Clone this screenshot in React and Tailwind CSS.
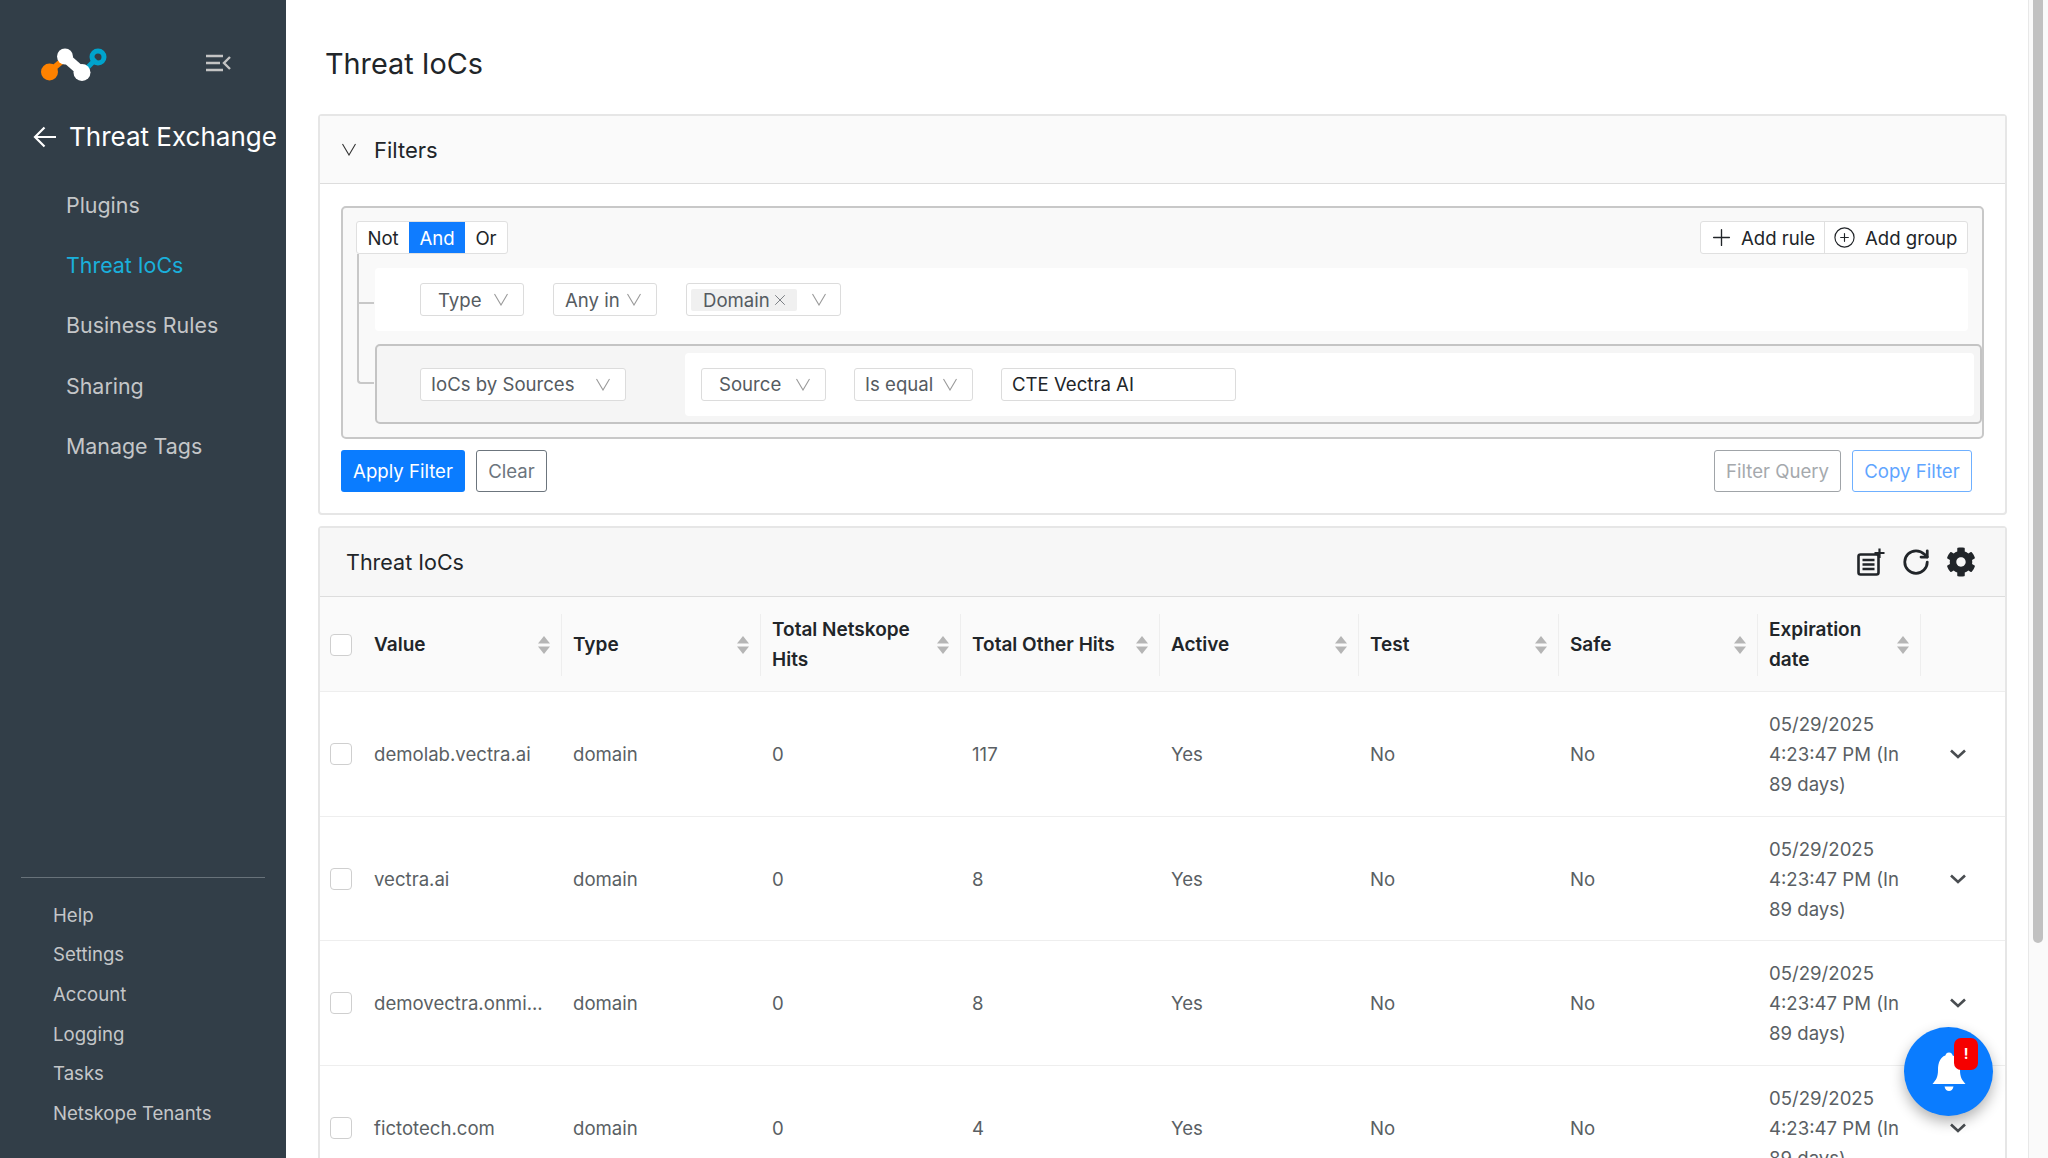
import React from "react";
import { Plus, CirclePlus, X, RotateCw } from "lucide-react";

const SortIcon = () => (
  <svg width="12" height="18" viewBox="0 0 12 18" className="shrink-0"><path d="M6 0 L12 7.5 H0 Z" fill="#b5b5b5"/><path d="M0 10.5 H12 L6 18 Z" fill="#b5b5b5"/></svg>
);
const Logo = () => (
  <svg width="68" height="36" viewBox="0 0 68 36" className="shrink-0">
    <path d="M8 26 L21 15" stroke="#ff8200" strokeWidth="6" />
    <circle cx="8.500" cy="26" r="8.500" fill="#ff8200" />
    <path d="M46 22 L55 13" stroke="#00a3cc" strokeWidth="5" />
    <circle cx="57" cy="11" r="6" fill="none" stroke="#00a3cc" strokeWidth="5" />
    <path d="M24 11 L41 26" stroke="#fff" strokeWidth="10" />
    <circle cx="24" cy="10.500" r="8" fill="#fff" />
    <circle cx="41" cy="26.500" r="8.500" fill="#fff" />
  </svg>
);
const MenuIcon = () => (
  <svg width="26" height="18" viewBox="0 0 26 18" fill="none" stroke="#c4c4c4" strokeWidth="2.400"><path d="M1 2 H18 M1 9 H15 M1 16 H18 M25 3 L19 9 L25 15"/></svg>
);
const BackArrow = () => (
  <svg width="24" height="22" viewBox="0 0 24 22" fill="none" stroke="#fff" strokeWidth="2.200" className="mr-[12px] shrink-0"><path d="M23 11 H2 M11.500 1.500 L2 11 L11.500 20.500"/></svg>
);
const ThinChevron = ({ className = "", color = "#9a9a9a" }) => (
  <svg width="14" height="13" viewBox="0 0 14 13" fill="none" stroke={color} strokeWidth="1.100" className={`shrink-0 ${className}`}><path d="M0.500 1 L7 12 L13.500 1"/></svg>
);
const RowChevron = () => (
  <svg width="16" height="10" viewBox="0 0 16 10" fill="none" stroke="#494d51" strokeWidth="2.600" className="shrink-0 ml-[29px]"><path d="M1 1.500 L8 8 L15 1.500"/></svg>
);
const ListAddIcon = () => (
  <svg width="28" height="28" viewBox="0 0 28 28" fill="none" stroke="#212529"><rect x="1.500" y="6.500" width="20" height="20" rx="2" strokeWidth="2.600"/><path d="M5.500 12 H17.500 M5.500 16.500 H17.500 M5.500 21 H17.500" strokeWidth="2.400"/><path d="M22.500 0.500 V10 M17.500 5 H27.500" strokeWidth="2.200"/></svg>
);
const GearIcon = () => (
  <svg width="30" height="30" viewBox="0 0 512 512" fill="#212529"><path d="M487.400 315.700l-42.600-24.600c4.300-23.200 4.300-47 0-70.200l42.600-24.600c4.900-2.800 7.100-8.600 5.500-14-11.100-35.600-30-67.800-54.700-94.600-3.800-4.100-10-5.100-14.800-2.300L380.800 110c-17.900-15.400-38.500-27.300-60.800-35.100V25.800c0-5.600-3.900-10.500-9.400-11.700-36.700-8.200-74.300-7.800-109.200 0-5.500 1.200-9.400 6.100-9.400 11.700V75c-22.200 7.900-42.800 19.800-60.800 35.100L88.700 85.500c-4.900-2.800-11-1.900-14.800 2.300-24.700 26.700-43.600 58.900-54.700 94.600-1.700 5.400.6 11.200 5.500 14L67.300 221c-4.300 23.200-4.300 47 0 70.200l-42.600 24.600c-4.900 2.800-7.100 8.600-5.500 14 11.100 35.600 30 67.800 54.700 94.600 3.800 4.100 10 5.100 14.800 2.300l42.600-24.600c17.900 15.400 38.500 27.300 60.800 35.100v49.200c0 5.600 3.900 10.500 9.400 11.700 36.700 8.200 74.300 7.800 109.200 0 5.500-1.200 9.400-6.100 9.400-11.700v-49.200c22.200-7.900 42.800-19.800 60.800-35.100l42.600 24.600c4.900 2.800 11 1.900 14.800-2.300 24.700-26.700 43.600-58.900 54.700-94.600 1.500-5.500-.7-11.300-5.600-14.100zM256 336c-44.100 0-80-35.900-80-80s35.900-80 80-80 80 35.900 80 80-35.900 80-80 80z"/></svg>
);
const BellIcon = () => (
  <svg width="34" height="40" viewBox="0 0 34 40" fill="#fff"><circle cx="17" cy="4" r="3.500"/><path d="M17 3 C8 3 6 11 6 18 C6 25 4 28 0.500 32 H33.500 C30 28 28 25 28 18 C28 11 26 3 17 3 Z"/><path d="M12.500 34.500 H21.500 C21 37.500 19 39 17 39 C15 39 13 37.500 12.500 34.500 Z"/></svg>
);

const Select = ({ w, label, pl = "pl-[17px]" }) => (
  <div className={`${w} ${pl} h-[33px] flex items-center justify-between pr-[15px] bg-white border border-[#dcdcdc] rounded-[3px] text-[#555b61] shrink-0`}>
    <span className="whitespace-nowrap">{label}</span>
    <ThinChevron />
  </div>
);

const cols = [
  { label: "Value", w: "w-[199px]" },
  { label: "Type", w: "w-[199px]" },
  { label: "Total Netskope Hits", w: "w-[200px]" },
  { label: "Total Other Hits", w: "w-[199px]" },
  { label: "Active", w: "w-[199px]" },
  { label: "Test", w: "w-[200px]" },
  { label: "Safe", w: "w-[199px]" },
  { label: "Expiration date", w: "w-[163px]" },
];
const rows = [
  ["demolab.vectra.ai", "117"],
  ["vectra.ai", "8"],
  ["demovectra.onmi...", "8"],
  ["fictotech.com", "4"],
];
const Check = () => (
  <div className="w-[43px] shrink-0 flex justify-start pl-[10px]">
    <div className="w-[22px] h-[22px] bg-white border border-[#cfcfcf] rounded-[4px] shrink-0" />
  </div>
);

export default function App() {
  return (
    <div className="flex h-[1158px] w-[2048px] overflow-hidden bg-white text-[18.600px] leading-[30px] text-[#212529] font-['Inter',sans-serif]">
      <aside className="w-[286px] shrink-0 bg-[#323e48] flex flex-col">
        <div className="flex items-center h-[36px] mt-[46px] pl-[41px]">
          <Logo />
          <div className="ml-[96px] mt-[-2px]"><MenuIcon /></div>
        </div>
        <div className="flex items-center h-[38px] mt-[36px] pl-[33px] text-white text-[26px]">
          <BackArrow />
          <span className="whitespace-nowrap">Threat Exchange</span>
        </div>
        <nav className="mt-[19px] pl-[66px] text-[21.400px] text-[#c4c6c8] flex flex-col">
          {["Plugins", "Threat IoCs", "Business Rules", "Sharing", "Manage Tags"].map((t) => (
            <div key={t} className={`h-[60.200px] flex items-center ${t === "Threat IoCs" ? "text-[#1ab0dc]" : ""}`}>{t}</div>
          ))}
        </nav>
        <div className="mt-auto mx-[21px] mb-[17px] border-t border-[#68727a]" />
        <div className="pl-[53px] pb-[25px] text-[#c4c6c8] flex flex-col">
          {["Help", "Settings", "Account", "Logging", "Tasks", "Netskope Tenants"].map((t) => (
            <div key={t} className="h-[39.700px] flex items-center">{t}</div>
          ))}
        </div>
      </aside>

      <main className="w-[1742px] shrink-0 relative overflow-hidden pl-[32px] pr-[21px]">
        <h1 className="text-[28.800px] leading-[36px] mt-[46px] mb-[32px] pl-[7px] font-normal">Threat IoCs</h1>

        <section className="border-2 border-[#e6e6e6] rounded-[4px] h-[401px] mb-[11px]">
          <div className="h-[68px] flex items-center bg-[#fafafa] border-b border-[#dddddd] pl-[22px] text-[22px]">
            <ThinChevron color="#333" className="mr-[18px]" />
            <span>Filters</span>
          </div>
          <div className="pt-[22px] pl-[21px] pr-[21px]">
            <div className="h-[233px] border-2 border-[#c8c8c8] rounded-[5px] bg-[#f9f9f9] relative">
              <div className="absolute left-[14px] top-[46px] w-[17px] h-[130px] border-l-2 border-b-2 border-[#c8c8c8] rounded-bl-[4px]" />
              <div className="absolute left-[14px] top-[94px] w-[17px] h-[2px] bg-[#c8c8c8]" />
              <div className="flex justify-between pt-[13px] pl-[13px] pr-[14px]">
                <div className="flex h-[33px] bg-white border border-[#e0e0e0] rounded-[3px]">
                  <div className="w-[52px] flex items-center justify-center">Not</div>
                  <div className="w-[56px] flex items-center justify-center bg-[#0f7cff] text-white">And</div>
                  <div className="w-[42px] flex items-center justify-center">Or</div>
                </div>
                <div className="flex h-[33px] bg-white border border-[#e0e0e0] rounded-[3px]">
                  <div className="flex items-center w-[124px] pl-[7px] border-r border-[#e0e0e0] whitespace-nowrap">
                    <Plus size={27} strokeWidth={1.200} className="mr-[6px] shrink-0" />Add rule
                  </div>
                  <div className="flex items-center w-[142px] pl-[8px] whitespace-nowrap">
                    <CirclePlus size={23} strokeWidth={1.200} className="mr-[9px] shrink-0" />Add group
                  </div>
                </div>
              </div>
              <div className="relative ml-[32px] mr-[14px] mt-[14px] h-[63px] bg-white rounded-[4px] flex items-center pl-[45px] gap-[29px]">
                <Select w="w-[104px]" label="Type" />
                <Select w="w-[104px]" label="Any in" pl="pl-[11px]" />
                <div className="w-[155px] h-[33px] flex items-center bg-white border border-[#dcdcdc] rounded-[3px] pl-[4px] shrink-0">
                  <div className="h-[22px] w-[106px] shrink-0 whitespace-nowrap bg-[#f0f0f0] rounded-[2px] flex items-center pl-[12px] text-[#555b61]">
                    Domain<X size={18} strokeWidth={1} className="ml-[1px] shrink-0" />
                  </div>
                  <ThinChevron className="ml-[15px]" />
                </div>
              </div>
              <div className="relative ml-[32px] mt-[13px] h-[80px] border-2 border-[#c4c4c4] rounded-[5px] bg-[#f5f5f5] flex items-center pl-[43px] pr-[6px]">
                <Select w="w-[206px]" label="IoCs by Sources" pl="pl-[10px]" />
                <div className="ml-[59px] flex-1 h-[63px] bg-white rounded-[4px] flex items-center pl-[16px] gap-[28px]">
                  <Select w="w-[125px]" label="Source" />
                  <Select w="w-[119px]" label="Is equal" pl="pl-[10px]" />
                  <div className="w-[235px] h-[33px] flex items-center bg-white border border-[#dcdcdc] rounded-[3px] pl-[10px] whitespace-nowrap">CTE Vectra AI</div>
                </div>
              </div>
            </div>
            <div className="flex justify-between mt-[11px] pr-[12px]">
              <div className="flex gap-[11px]">
                <div className="h-[42px] w-[124px] flex items-center justify-center bg-[#0a7cff] text-white rounded-[3px]">Apply Filter</div>
                <div className="h-[42px] w-[71px] flex items-center justify-center border border-[#6c757d] text-[#6c757d] rounded-[3px]">Clear</div>
              </div>
              <div className="flex gap-[11px]">
                <div className="h-[42px] w-[127px] flex items-center justify-center border border-[#a0a4a8] text-[#a5a9ad] rounded-[3px]">Filter Query</div>
                <div className="h-[42px] w-[120px] flex items-center justify-center border border-[#6fb0ff] text-[#5fa5ff] rounded-[3px]">Copy Filter</div>
              </div>
            </div>
          </div>
        </section>

        <section className="border-2 border-[#e6e6e6] rounded-[4px] h-[700px]">
          <div className="h-[69px] flex items-center justify-between bg-[#f7f7f7] border-b border-[#dddddd] pl-[26px] pr-[29px]">
            <span className="text-[21.500px]">Threat IoCs</span>
            <div className="flex items-center gap-[15px]">
              <ListAddIcon />
              <div className="ml-[1px]"><RotateCw size={30} strokeWidth={2.200} color="#212529" /></div>
              <GearIcon />
            </div>
          </div>
          <div className="flex items-center h-[95px] pt-[2px] bg-[#fafafa] border-b border-[#eeeeee] font-semibold text-[19px]">
            <Check />
            {cols.map((c) => (
              <div key={c.label} className={`${c.w} shrink-0 h-[62px] flex items-center justify-between pl-[11px] pr-[11px] border-r border-[#eeeeee]`}>
                <span className="max-w-[150px]">{c.label}</span>
                <SortIcon />
              </div>
            ))}
          </div>
          {rows.map(([v, n]) => (
            <div key={v} className="flex items-center h-[124.700px] shrink-0 border-b border-[#eeeeee] text-[#5a5f64]">
              <Check />
              <div className="w-[199px] shrink-0 pl-[11px] whitespace-nowrap">{v}</div>
              <div className="w-[199px] shrink-0 pl-[11px]">domain</div>
              <div className="w-[200px] shrink-0 pl-[11px]">0</div>
              <div className="w-[199px] shrink-0 pl-[11px]">{n}</div>
              <div className="w-[199px] shrink-0 pl-[11px]">Yes</div>
              <div className="w-[200px] shrink-0 pl-[11px]">No</div>
              <div className="w-[199px] shrink-0 pl-[11px]">No</div>
              <div className="w-[163px] shrink-0 pl-[11px]">05/29/2025 4:23:47 PM (In 89 days)</div>
              <RowChevron />
            </div>
          ))}
        </section>

        <div className="absolute left-[1618px] top-[1027px] w-[89px] h-[89px] rounded-full bg-[#0a7cff] shadow-[0_6px_14px_rgba(0,0,0,0.3)] flex items-center justify-center">
          <BellIcon />
          <div className="absolute left-[50px] top-[11px] w-[24px] h-[32px] rounded-[7px] bg-[#f60000] text-white text-[14px] font-bold flex items-center justify-center">!</div>
        </div>
      </main>

      <div className="w-[20px] shrink-0 bg-[#fafafa] border-l border-[#e8e8e8] pl-[4px] pr-[5px]">
        <div className="h-[943px] bg-[#c1c1c1] rounded-b-[5px]" />
      </div>
    </div>
  );
}
